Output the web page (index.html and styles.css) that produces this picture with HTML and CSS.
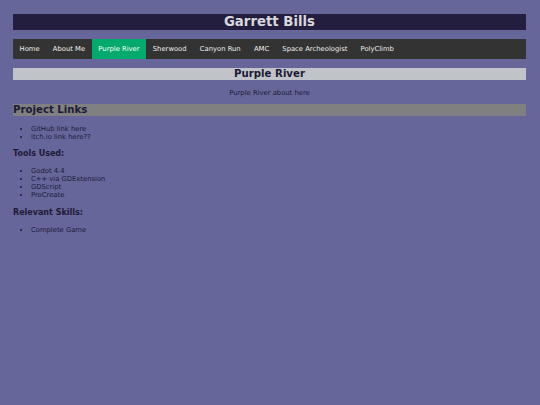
FILE: index.html
```html
<!DOCTYPE html>
<html lang="en">
<head>
<meta charset="utf-8">
<title>Garrett Bills - Purple River</title>
<link rel="stylesheet" href="styles.css">
</head>
<body>
<header class="site-header">
  <h1 class="site-title">Garrett Bills</h1>
</header>
<nav class="topnav">
  <a href="#">Home</a>
  <a href="#">About Me</a>
  <a href="#" class="active">Purple River</a>
  <a href="#">Sherwood</a>
  <a href="#">Canyon Run</a>
  <a href="#">AMC</a>
  <a href="#">Space Archeologist</a>
  <a href="#">PolyClimb</a>
</nav>
<main class="content">
  <h2 class="page-title">Purple River</h2>
  <p class="about">Purple River about here</p>
  <h2 class="section-title">Project Links</h2>
  <ul class="list">
    <li>GitHub link here</li>
    <li>itch.io link here??</li>
  </ul>
  <h3 class="sub-title">Tools Used:</h3>
  <ul class="list">
    <li>Godot 4.4</li>
    <li>C++ via GDExtension</li>
    <li>GDScript</li>
    <li>ProCreate</li>
  </ul>
  <h3 class="sub-title">Relevant Skills:</h3>
  <ul class="list">
    <li>Complete Game</li>
  </ul>
</main>
</body>
</html>
```

FILE: styles.css
```css
html, body {
  margin: 0;
  padding: 0;
}
body {
  background: #67669a;
  color: #1c1a36;
  font-family: "DejaVu Sans", Verdana, sans-serif;
  padding: 14px 14px 0 13px;
  min-height: 405px;
  box-sizing: border-box;
}
.site-header {
  background: #231d3e;
  height: 16px;
  display: flex;
  align-items: center;
  justify-content: center;
}
.site-title {
  margin: 0;
  font-size: 13.3px;
  line-height: 16px;
  color: #d8d8dc;
  font-weight: bold;
}
.topnav {
  margin-top: 9px;
  background: #333333;
  height: 20px;
  display: flex;
}
.topnav a {
  display: block;
  padding: 0 6.6px;
  line-height: 20px;
  font-size: 6.8px;
  color: #eeeeee;
  text-decoration: none;
}
.topnav a.active {
  background: #04aa6d;
  color: #ffffff;
}
.content {
  margin-top: 9px;
}
.page-title {
  margin: 0;
  background: #c0c4c8;
  text-align: center;
  font-size: 10.2px;
  line-height: 12px;
}
.about {
  text-align: center;
  font-size: 6.8px;
  line-height: 8px;
  margin: 9px 0 0;
}
.section-title {
  margin: 7px 0 0;
  background: #808080;
  font-size: 10.2px;
  line-height: 12px;
}
.list {
  margin: 9px 0 0;
  padding-left: 18px;
  font-size: 6.8px;
  line-height: 8.3px;
}
.sub-title {
  margin: 7.5px 0 0;
  font-size: 8px;
  line-height: 10px;
}
.list + .sub-title + .list {
  margin-top: 7.5px;
}
.list + .sub-title + .list + .sub-title {
  margin-top: 8.5px;
}
```
